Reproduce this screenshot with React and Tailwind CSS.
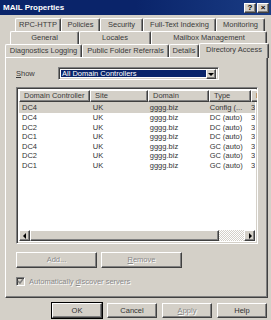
import React from "react";

const raised =
  "border border-t-white border-l-white border-r-[#404040] border-b-[#404040] shadow-[inset_-1px_-1px_0_#808080]";
const sunken =
  "border border-t-[#808080] border-l-[#808080] border-r-white border-b-white shadow-[inset_1px_1px_0_#404040,inset_-1px_-1px_0_#d4d0c8]";

const rows = [
  ["DC4", "UK", "gggg.biz", "Config (...", true],
  ["DC4", "UK", "gggg.biz", "DC (auto)"],
  ["DC2", "UK", "gggg.biz", "DC (auto)"],
  ["DC1", "UK", "gggg.biz", "DC (auto)"],
  ["DC4", "UK", "gggg.biz", "GC (auto)"],
  ["DC2", "UK", "gggg.biz", "GC (auto)"],
  ["DC1", "UK", "gggg.biz", "GC (auto)"],
];

function Tab({ label, w }) {
  return (
    <div
      className={`${w} h-full flex items-center justify-center border-l border-t border-l-white border-t-white border-r border-r-[#404040] rounded-t-[2px] shadow-[inset_-1px_0_0_#808080] text-[#3a3a3a]`}
    >
      {label}
    </div>
  );
}

function Arrow({ dir }) {
  const pts = dir === "left" ? "5,1 2,4 5,7" : dir === "right" ? "3,1 6,4 3,7" : "1,3 7,3 4,6";
  return (
    <svg width="8" height="8" viewBox="0 0 8 8">
      <polygon points={pts} fill="#000" />
    </svg>
  );
}

function Btn({ children, w, disabled, def }) {
  return (
    <div
      className={`${w} h-full flex items-center justify-center ${raised} ${
        def ? "outline outline-1 outline-black" : ""
      } ${disabled ? "text-[#8a8a8a] [text-shadow:1px_1px_0_#fff]" : "text-[#333]"}`}
    >
      {children}
    </div>
  );
}

export default function App() {
  return (
    <div className="w-[271px] h-[320px] bg-[#d4d0c8] flex flex-col overflow-hidden text-[7.5px] leading-none font-['Liberation_Sans',Arial,sans-serif]">
      {/* title bar */}
      <div className="h-[15px] flex items-center justify-between pl-[3px] pr-[2px] bg-gradient-to-r from-[#0a246a] via-[#0a246a] to-[#1a3c84]">
        <span className="text-white font-bold text-[8px]">MAIL Properties</span>
        <div className="flex gap-[1px]">
          <div className={`w-[12px] h-[10px] bg-[#d4d0c8] flex items-center justify-center font-bold text-[8px] ${raised}`}>?</div>
          <div className={`w-[12px] h-[10px] bg-[#d4d0c8] flex items-center justify-center font-bold text-[8px] ${raised}`}>×</div>
        </div>
      </div>

      {/* tabs */}
      <div className="flex flex-col mt-[3px]">
        <div className="flex h-[13px] ml-[15px]">
          <Tab label="RPC-HTTP" w="w-[46px]" />
          <Tab label="Policies" w="w-[39px]" />
          <Tab label="Security" w="w-[43px]" />
          <Tab label="Full-Text Indexing" w="w-[73px]" />
          <Tab label="Monitoring" w="w-[49px]" />
        </div>
        <div className="flex h-[13px] ml-[10px]">
          <Tab label="General" w="w-[69px]" />
          <Tab label="Locales" w="w-[72px]" />
          <Tab label="Mailbox Management" w="w-[116px]" />
        </div>
        <div className="flex h-[13px] ml-[5px] items-end">
          <Tab label="Diagnostics Logging" w="w-[77px]" />
          <Tab label="Public Folder Referrals" w="w-[87px]" />
          <Tab label="Details" w="w-[30px]" />
          <div className="w-[70px] h-[15px] -mb-[1px] relative z-10 bg-[#d4d0c8] flex items-start pt-[2px] justify-center border-l border-t border-l-white border-t-white border-r border-r-[#404040] rounded-t-[2px] shadow-[inset_-1px_0_0_#808080] text-[#3a3a3a]">
            Directory Access
          </div>
        </div>
      </div>

      {/* panel */}
      <div className="ml-[5px] w-[263px] h-[241px] flex flex-col border border-t-white border-l-white border-r-[#404040] border-b-[#404040] shadow-[inset_-1px_-1px_0_#808080] pl-[10px]">
        <div className="flex items-center mt-[9px] h-[13px]">
          <span className="w-[42px] text-[#3a3a3a]">
            <span className="underline">S</span>how
          </span>
          <div className={`w-[161px] h-full bg-white flex items-center ${sunken} p-[2px]`}>
            <div className="flex-1 h-full bg-[#0a246a] text-white flex items-center pl-[1px]">All Domain Controllers</div>
            <div className={`w-[10px] h-[10px] -my-[1px] bg-[#d4d0c8] flex items-center justify-center ${raised}`}>
              <Arrow dir="down" />
            </div>
          </div>
        </div>

        {/* list */}
        <div className={`mt-[7px] w-[242px] h-[157px] bg-white flex flex-col ${sunken} p-[2px] overflow-hidden`}>
          <div className="flex h-[12px] shrink-0 text-[#3a3a3a]">
            {[
              ["Domain Controller", "w-[71px]"],
              ["Site", "w-[58px]"],
              ["Domain", "w-[61px]"],
              ["Type", "w-[42px]"],
              ["L", "w-[12px]"],
            ].map(([h, w]) => (
              <div key={h} className={`${w} shrink-0 h-full bg-[#d4d0c8] flex items-center pl-[4px] overflow-hidden ${raised}`}>
                {h}
              </div>
            ))}
          </div>
          <div className="flex-1 flex flex-col text-[#333]">
            {rows.map(([dc, site, dom, type, sel], i) => (
              <div key={i} className={`flex h-[9.5px] items-center shrink-0 ${sel ? "bg-[#d4d0c8] h-[11px]" : ""}`}>
                <span className="w-[71px] pl-[3px]">{dc}</span>
                <span className="w-[58px] pl-[4px]">{site}</span>
                <span className="w-[61px] pl-[4px]">{dom}</span>
                <span className="w-[42px] pl-[4px]">{type}</span>
                <span className="w-[8px] pl-[4px] overflow-hidden">3</span>
              </div>
            ))}
          </div>
          {/* horizontal scrollbar */}
          <div className="h-[11px] shrink-0 flex bg-[#d4d0c8]">
            <div className={`w-[11px] h-full flex items-center justify-center ${raised}`}>
              <Arrow dir="left" />
            </div>
            <div className={`w-[189px] h-full ${raised}`} />
            <div className="flex-1 h-full bg-[repeating-conic-gradient(#fff_0_25%,#d4d0c8_0_50%)] bg-[length:2px_2px]" />
            <div className={`w-[11px] h-full flex items-center justify-center ${raised}`}>
              <Arrow dir="right" />
            </div>
          </div>
        </div>

        {/* add / remove */}
        <div className="flex gap-[4px] mt-[8px] h-[16px]">
          <Btn w="w-[81px]" disabled>Add...</Btn>
          <Btn w="w-[81px]" disabled>
            <span>
              <span className="underline">R</span>emove
            </span>
          </Btn>
        </div>

        {/* checkbox */}
        <div className="flex items-center gap-[4px] mt-[9px] h-[9px] text-[#8a8a8a] [text-shadow:1px_1px_0_#fff]">
          <div className={`w-[9px] h-[9px] bg-[#d4d0c8] flex items-center justify-center ${sunken}`}>
            <svg width="7" height="7" viewBox="0 0 7 7">
              <polyline points="1,3 3,5 6,1" fill="none" stroke="#808080" strokeWidth="1.5" />
            </svg>
          </div>
          <span>
            Automatically <span className="underline">d</span>iscover servers
          </span>
        </div>
      </div>

      {/* dialog buttons */}
      <div className="flex gap-[5px] mt-[5px] h-[15px] ml-[52px]">
        <Btn w="w-[50px]" def>OK</Btn>
        <Btn w="w-[50px]">Cancel</Btn>
        <Btn w="w-[50px]" disabled>
          <span>
            <span className="underline">A</span>pply
          </span>
        </Btn>
        <Btn w="w-[50px]">Help</Btn>
      </div>
    </div>
  );
}
